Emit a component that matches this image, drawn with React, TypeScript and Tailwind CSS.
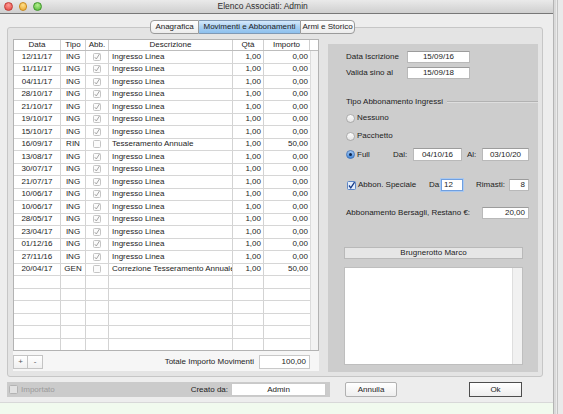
import React from 'react';

type Row = [string, string, boolean, string, string, string];

const rows: Row[] = [
  ['12/11/17', 'ING', true, 'Ingresso Linea', '1,00', '0,00'],
  ['11/11/17', 'ING', true, 'Ingresso Linea', '1,00', '0,00'],
  ['04/11/17', 'ING', true, 'Ingresso Linea', '1,00', '0,00'],
  ['28/10/17', 'ING', true, 'Ingresso Linea', '1,00', '0,00'],
  ['21/10/17', 'ING', true, 'Ingresso Linea', '1,00', '0,00'],
  ['19/10/17', 'ING', true, 'Ingresso Linea', '1,00', '0,00'],
  ['15/10/17', 'ING', true, 'Ingresso Linea', '1,00', '0,00'],
  ['16/09/17', 'RIN', false, 'Tesseramento Annuale', '1,00', '50,00'],
  ['13/08/17', 'ING', true, 'Ingresso Linea', '1,00', '0,00'],
  ['30/07/17', 'ING', true, 'Ingresso Linea', '1,00', '0,00'],
  ['21/07/17', 'ING', true, 'Ingresso Linea', '1,00', '0,00'],
  ['10/06/17', 'ING', true, 'Ingresso Linea', '1,00', '0,00'],
  ['10/06/17', 'ING', true, 'Ingresso Linea', '1,00', '0,00'],
  ['28/05/17', 'ING', true, 'Ingresso Linea', '1,00', '0,00'],
  ['23/04/17', 'ING', true, 'Ingresso Linea', '1,00', '0,00'],
  ['01/12/16', 'ING', true, 'Ingresso Linea', '1,00', '0,00'],
  ['27/11/16', 'ING', true, 'Ingresso Linea', '1,00', '0,00'],
  ['20/04/17', 'GEN', false, 'Correzione Tesseramento Annuale', '1,00', '50,00'],
];

// table checkbox, greyed out like a disabled cell editor
function CellCheck({ checked }: { checked: boolean }) {
  return (
    <svg width="8" height="8" viewBox="0 0 8 8">
      <rect x="0.5" y="0.5" width="7" height="7" rx="1" fill="#fbfbfb" stroke="#c4c4c4" />
      {checked && <path d="M1.8 4.2 L3.3 6 L6.6 0.8" fill="none" stroke="#9c9c9c" strokeWidth="0.9" />}
    </svg>
  );
}

function Radio({ selected }: { selected?: boolean }) {
  return selected ? (
    <svg width="9" height="9" viewBox="0 0 9 9">
      <defs>
        <linearGradient id="rb" x1="0" y1="0" x2="0" y2="1">
          <stop offset="0" stopColor="#a9cdf5" />
          <stop offset="1" stopColor="#3d84d9" />
        </linearGradient>
      </defs>
      <circle cx="4.5" cy="4.5" r="4" fill="url(#rb)" stroke="#416fb0" strokeWidth="0.8" />
      <circle cx="4.5" cy="4.5" r="1.5" fill="#10254a" />
    </svg>
  ) : (
    <svg width="9" height="9" viewBox="0 0 9 9">
      <defs>
        <linearGradient id="rw" x1="0" y1="0" x2="0" y2="1">
          <stop offset="0" stopColor="#ffffff" />
          <stop offset="1" stopColor="#e2e2e2" />
        </linearGradient>
      </defs>
      <circle cx="4.5" cy="4.5" r="4" fill="url(#rw)" stroke="#9a9a9a" strokeWidth="0.8" />
    </svg>
  );
}

function Field({ value, className, align = 'text-center' }: { value: string; className: string; align?: string }) {
  return (
    <div
      className={`h-[12px] bg-white border border-[#b9b9b9] border-t-[#9c9c9c] flex items-center px-[3px] ${align} ${className}`}
    >
      <span className="w-full">{value}</span>
    </div>
  );
}

function TableRow({ row }: { row?: Row }) {
  return (
    <div className="flex h-[12.5px] shrink-0 border-b border-[#d6d6d6] items-center">
      <div className="w-[47px] h-full border-r border-[#d3d3d3] flex items-center justify-center">{row?.[0]}</div>
      <div className="w-[25px] h-full border-r border-[#d3d3d3] flex items-center justify-center">{row?.[1]}</div>
      <div className="w-[23px] h-full border-r border-[#d3d3d3] flex items-center justify-center">
        {row && <CellCheck checked={row[2]} />}
      </div>
      <div className="w-[124px] h-full border-r border-[#d3d3d3] flex items-center pl-[3px] overflow-hidden whitespace-nowrap">
        {row?.[3]}
      </div>
      <div className="w-[31px] h-full border-r border-[#d3d3d3] flex items-center justify-end pr-[2px]">{row?.[4]}</div>
      <div className="w-[46px] h-full flex items-center justify-end pr-[2px]">{row?.[5]}</div>
    </div>
  );
}

export default function App() {
  const empty = Array.from({ length: 7 });

  return (
    <div className="w-[563px] h-[414px] flex overflow-hidden bg-[#f1faee] font-['Liberation_Sans',Arial,sans-serif] text-[8px] leading-none text-[#1c1c1c]">
      <div className="w-[553px] flex flex-col">
        {/* window */}
        <div className="h-[403px] bg-[#ededed] border-b border-[#d8d8d8] flex flex-col">
          {/* title bar */}
          <div className="h-[14px] shrink-0 flex items-center bg-gradient-to-b from-[#eaeaea] to-[#cfcfcf] border-b border-[#777]">
            <div className="flex items-center gap-[6px] pl-[4px]">
              <span className="w-[8.5px] h-[8.5px] rounded-full bg-[radial-gradient(circle_at_50%_30%,#ff9a94,#e0443e)] border border-[#c23b35]" />
              <span className="w-[8.5px] h-[8.5px] rounded-full bg-[radial-gradient(circle_at_50%_30%,#ffe08a,#e9a52b)] border border-[#c98a1e]" />
              <span className="w-[8.5px] h-[8.5px] rounded-full bg-[radial-gradient(circle_at_50%_30%,#b5f08f,#4fb534)] border border-[#3f962a]" />
            </div>
            <span className="ml-[176px] text-[8.5px] text-[#2e2e2e]">Elenco Associati: Admin</span>
          </div>

          {/* tab box */}
          <div className="mt-[13px] ml-[7px] w-[536px] h-[350px] shrink-0 border border-[#c6c6c6] bg-[#e4e4e4] rounded-[3px] flex flex-col">
            <div className="-mt-[8px] h-[14px] ml-[142px] flex">
              <div className="w-[49px] h-full flex items-center justify-center border border-[#9b9b9b] rounded-l-[4px] bg-gradient-to-b from-white to-[#ececec]">
                Anagrafica
              </div>
              <div className="w-[101px] h-full flex items-center justify-center border-y border-[#7f99b5] bg-gradient-to-b from-[#d6eafb] via-[#a8d0f3] to-[#8dc0ee]">
                Movimenti e Abbonamenti
              </div>
              <div className="w-[55px] h-full flex items-center justify-center border border-[#9b9b9b] rounded-r-[4px] bg-gradient-to-b from-white to-[#ececec]">
                Armi e Storico
              </div>
            </div>

            <div className="flex items-start pl-[5px]">
              {/* movements table */}
              <div className="mt-[4.5px] w-[306px] flex flex-col">
                <div className="h-[312px] border border-[#b3b3b3] bg-white flex flex-col overflow-hidden">
                  <div className="h-[11.5px] shrink-0 flex border-b border-[#bdbdbd] text-[#222]">
                    <div className="w-[47px] border-r border-[#cfcfcf] flex items-center justify-center">Data</div>
                    <div className="w-[25px] border-r border-[#cfcfcf] flex items-center justify-center">Tipo</div>
                    <div className="w-[23px] border-r border-[#cfcfcf] flex items-center justify-center">Abb.</div>
                    <div className="w-[124px] border-r border-[#cfcfcf] flex items-center justify-center">Descrizione</div>
                    <div className="w-[31px] border-r border-[#cfcfcf] flex items-center justify-center">Qtà</div>
                    <div className="w-[46px] border-r border-[#cfcfcf] flex items-center justify-center">Importo</div>
                    <div className="w-[8px]" />
                  </div>
                  <div className="flex-1 flex overflow-hidden">
                    <div className="w-[296px] flex flex-col">
                      {rows.map((r, i) => (
                        <TableRow key={i} row={r} />
                      ))}
                      {empty.map((_, i) => (
                        <TableRow key={'e' + i} />
                      ))}
                    </div>
                    <div className="w-[8px] bg-[#f3f3f3] border-l border-[#dcdcdc]" />
                  </div>
                </div>
                <div className="h-[20px] bg-[#f6f6f6] flex items-end pb-[1.5px]">
                  <div className="w-[15px] h-[14px] border border-[#c4c4c4] bg-gradient-to-b from-white to-[#f0f0f0] flex items-center justify-center text-[#555]">
                    +
                  </div>
                  <div className="w-[15px] h-[14px] border border-l-0 border-[#c4c4c4] bg-gradient-to-b from-white to-[#f0f0f0] flex items-center justify-center text-[#555]">
                    -
                  </div>
                  <div className="flex-1 h-[14px] flex items-center justify-end pr-[5px]">Totale Importo Movimenti</div>
                  <div className="w-[51px] h-[14px] mr-[9px] bg-white border border-[#c9c9c9] flex items-center justify-end pr-[3px]">
                    100,00
                  </div>
                </div>
              </div>

              {/* subscription panel */}
              <div className="ml-[9px] mt-[10px] w-[210px] h-[328px] bg-[#cdcdcd] flex flex-col pl-[18px]">
                <div className="mt-[6.5px] h-[12px] flex items-center">
                  <span className="w-[61px]">Data Iscrizione</span>
                  <Field value="15/09/16" className="w-[63px]" />
                </div>
                <div className="mt-[4.5px] h-[12px] flex items-center">
                  <span className="w-[61px]">Valida sino al</span>
                  <Field value="15/09/18" className="w-[63px]" />
                </div>

                <div className="mt-[18px] h-[10px] flex items-center">
                  <span>Tipo Abbonamento Ingressi</span>
                  <span className="flex-1 ml-[4px] h-px bg-[#b2b2b2] border-b border-[#dedede] box-content" />
                </div>

                <div className="mt-[6px] h-[10px] flex items-center gap-[2px]">
                  <Radio />
                  <span>Nessuno</span>
                </div>
                <div className="mt-[8px] h-[10px] flex items-center gap-[2px]">
                  <Radio />
                  <span>Pacchetto</span>
                </div>
                <div className="mt-[7px] h-[13px] flex items-center">
                  <div className="w-[47px] flex items-center gap-[2px]">
                    <Radio selected />
                    <span>Full</span>
                  </div>
                  <span className="w-[20px]">Dal:</span>
                  <Field value="04/10/16" className="w-[49px] h-[13px]" />
                  <span className="w-[20px] pl-[5px]">Al:</span>
                  <Field value="03/10/20" className="w-[47px] h-[13px]" />
                </div>

                <div className="mt-[18px] h-[12px] flex items-center">
                  <div className="w-[83px] flex items-center gap-[2px] pl-[1px]">
                    <svg width="9" height="9" viewBox="0 0 9 9">
                      <rect x="0.5" y="0.5" width="8" height="8" rx="1" fill="#e3edfb" stroke="#5d86c6" />
                      <path d="M2 4.5 L3.8 6.8 L7.6 1.2" fill="none" stroke="#173a86" strokeWidth="1.3" />
                    </svg>
                    <span>Abbon. Speciale</span>
                  </div>
                  <span className="w-[12px]">Da:</span>
                  <div className="w-[22px] h-[12px] bg-white border border-[#6f9fe0] shadow-[0_0_0_1px_#a9c8ef] flex items-center pl-[2px]">
                    12
                  </div>
                  <span className="ml-[13px] w-[33px]">Rimasti:</span>
                  <Field value="8" align="text-right" className="w-[20px]" />
                </div>

                <div className="mt-[16px] h-[12px] flex items-center">
                  <span className="w-[136px]">Abbonamento Bersagli, Restano €:</span>
                  <Field value="20,00" align="text-right" className="w-[47px]" />
                </div>

                <div className="mt-[28px] -ml-[2px] w-[179px] h-[12px] bg-[#e6e6e6] border border-[#b9b9b9] flex items-center justify-center">
                  Brugnerotto Marco
                </div>
                <div className="mt-[8px] -ml-[2px] w-[179px] h-[98px] bg-white border border-[#bebebe] flex justify-end">
                  <div className="w-[10px] h-full bg-[#f1f1f1] border-l border-[#dedede]" />
                </div>
              </div>
            </div>
          </div>

          {/* bottom row */}
          <div className="mt-[5px] h-[15px] flex items-center">
            <div className="ml-[7px] w-[323px] h-full bg-[#cbcbcb] flex items-center pl-[2px] pr-[4px]">
              <svg width="9" height="9" viewBox="0 0 9 9">
                <rect x="0.5" y="0.5" width="8" height="8" rx="1" fill="#e2e2e2" stroke="#b3b3b3" />
              </svg>
              <span className="ml-[3px] text-[#9b9b9b]">Importato</span>
              <span className="ml-auto mr-[3px]">Creato da:</span>
              <div className="w-[95px] h-[13px] bg-white border border-[#c9c9c9] flex items-center justify-center">Admin</div>
            </div>
            <div className="ml-[15px] w-[52px] h-[15px] rounded-[2px] border border-[#b1b1b1] bg-gradient-to-b from-white to-[#eeeeee] flex items-center justify-center">
              Annulla
            </div>
            <div className="ml-[72px] w-[53px] h-[15px] border border-[#4d4d4d] bg-gradient-to-b from-white to-[#ededed] flex items-center justify-center">
              Ok
            </div>
          </div>
        </div>
        <div className="flex-1" />
      </div>

      {/* neighbouring window edge */}
      <div className="w-[10px] h-full border-l border-[#b4b4b4] bg-[#eaeaea] flex">
        <div className="w-[2px] h-full bg-[#dadada]" />
        <div className="w-[1px] h-full bg-[#c4c4c4] ml-[1px]" />
      </div>
    </div>
  );
}
